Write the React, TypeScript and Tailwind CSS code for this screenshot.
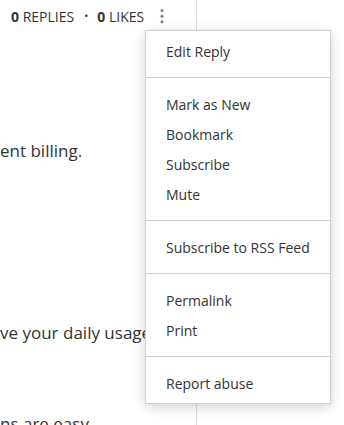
import { Fragment } from 'react';

const MENU_SECTIONS: string[][] = [
  ['Edit Reply'],
  ['Mark as New', 'Bookmark', 'Subscribe', 'Mute'],
  ['Subscribe to RSS Feed'],
  ['Permalink', 'Print'],
  ['Report abuse'],
];

function KebabIcon() {
  return (
    <svg width="4" height="16" viewBox="0 0 4 16" className="block">
      <circle cx="2" cy="2.5" r="1.5" fill="#7a7a7a" />
      <circle cx="2" cy="8.2" r="1.5" fill="#7a7a7a" />
      <circle cx="2" cy="13.8" r="1.5" fill="#7a7a7a" />
    </svg>
  );
}

function OptionsMenu() {
  return (
    <div className="absolute left-[145px] top-[30px] w-[186px] bg-white border border-[#d0d0d0] shadow-[0_3px_12px_rgba(0,0,0,0.18)] text-[14px] leading-[30px] text-[#333]">
      {MENU_SECTIONS.map((section, i) => {
        const first = i === 0;
        const last = i === MENU_SECTIONS.length - 1;
        return (
          <Fragment key={i}>
            {!first && <div className="h-px bg-[#cfcfcf]" />}
            <ul
              className={
                (first ? 'pt-[6px] ' : 'pt-[12px] ') + (last ? 'pb-[4px]' : 'pb-[10px]')
              }
            >
              {section.map((item) => (
                <li key={item} className="px-5 whitespace-nowrap">
                  {item}
                </li>
              ))}
            </ul>
          </Fragment>
        );
      })}
    </div>
  );
}

export default function App() {
  return (
    <div
      className="relative w-[344px] h-[425px] overflow-hidden bg-white text-[#333]"
      style={{ fontFamily: '"Open Sans", "Noto Sans", sans-serif' }}
    >
      <div className="w-[197px] h-full border-r border-[#dddddd] overflow-hidden">
        {/* Reply stats */}
        <div className="flex items-center h-[30px] pt-[2px] pl-[11px] text-[14px] whitespace-nowrap">
          <span>
            <b className="font-bold">0</b> REPLIES
          </span>
          <span className="ml-[10px] mr-[9px] text-[11px]">•</span>
          <span>
            <b className="font-bold">0</b> LIKES
          </span>
          <span className="ml-[16px]">
            <KebabIcon />
          </span>
        </div>

        {/* Post body (clipped) */}
        <div className="text-[17px] leading-[26px] whitespace-nowrap">
          <div className="mt-[108px]">ent billing.</div>
          <div className="mt-[156px]">ve your daily usage, and</div>
          <div className="mt-[65px]">ns are easy.</div>
        </div>
      </div>

      <OptionsMenu />
    </div>
  );
}
